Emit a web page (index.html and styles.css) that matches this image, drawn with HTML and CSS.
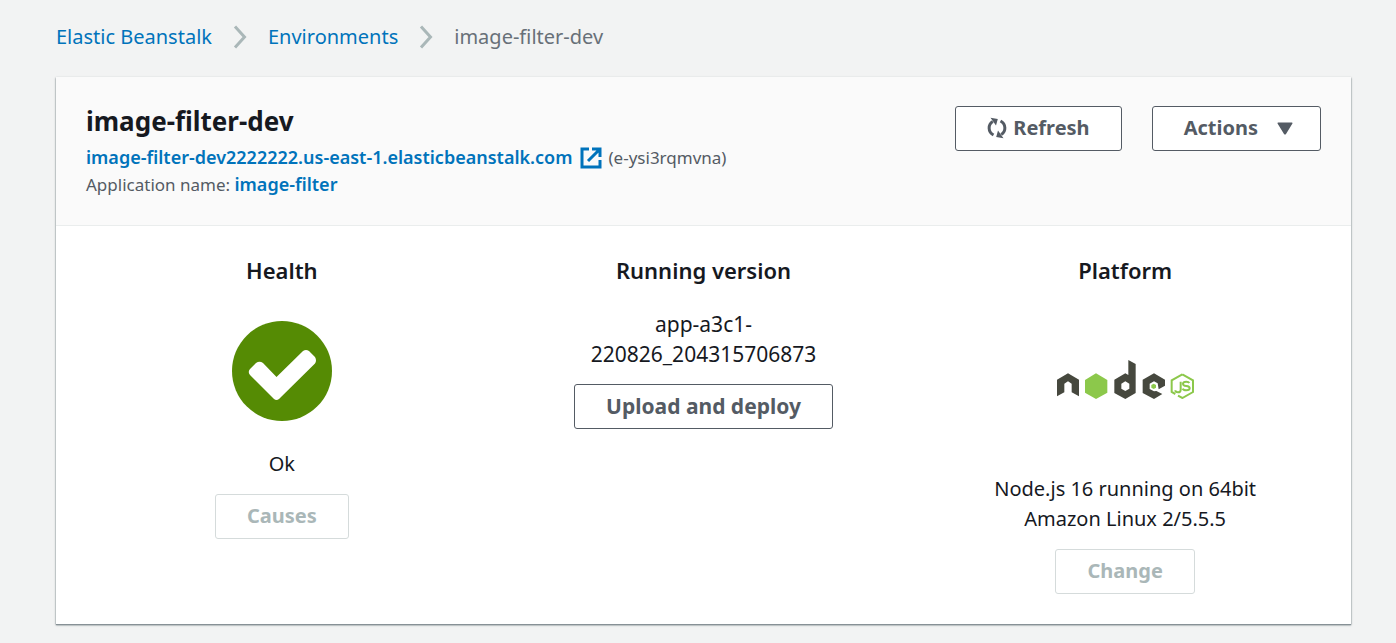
FILE: index.html
```html
<!DOCTYPE html>
<html lang="en">
<head>
<meta charset="utf-8">
<meta name="viewport" content="width=device-width, initial-scale=1">
<title>image-filter-dev</title>
<link rel="stylesheet" href="styles.css">
</head>
<body>
<nav class="breadcrumbs" aria-label="Breadcrumb">
  <a href="#">Elastic Beanstalk</a>
  <svg class="chevron" viewBox="0 0 14 24" aria-hidden="true"><path d="M2 1.500 11.500 12 2 22.500"/></svg>
  <a href="#">Environments</a>
  <svg class="chevron" viewBox="0 0 14 24" aria-hidden="true"><path d="M2 1.500 11.500 12 2 22.500"/></svg>
  <span>image-filter-dev</span>
</nav>
<main class="card">
  <header class="card-header">
    <div class="summary">
      <h1>image-filter-dev</h1>
      <p class="url-line">
        <a href="#">image-filter-dev2222222.us-east-1.elasticbeanstalk.com</a>
        <svg class="external" viewBox="0 0 22 22" aria-hidden="true"><path d="M9 2H2v18h18v-7M12 2h8v8M19.500 2.500 8 14"/></svg>
        <span>(e-ysi3rqmvna)</span>
      </p>
      <p>Application name: <a href="#">image-filter</a></p>
    </div>
    <div class="actions">
      <button class="button" type="button">
        <svg class="refresh" viewBox="0 0 20 22" aria-hidden="true">
          <path class="arc" d="M6.500 18C.8 15 .8 7.500 5.800 4.500M13.500 4C19.200 7 19.200 14.500 14.200 17.500"/>
          <path class="head" d="M3.500.8 10.800 2 9 8.500ZM16.500 21.200 9.200 20 11 13.500Z"/>
        </svg>Refresh
      </button>
      <button class="button" type="button">Actions
        <svg class="caret" viewBox="0 0 16 13" aria-hidden="true"><path d="M1 .5h14q1 .3.300 1.300L9 12q-1 1-2 0L.7 1.800Q0 .8 1 .5Z"/></svg>
      </button>
    </div>
  </header>
  <div class="columns">
    <section class="column">
      <h2>Health</h2>
      <svg class="status" viewBox="0 0 100 100" role="img" aria-label="Ok">
        <circle cx="50" cy="50" r="50"/>
        <path d="M18 48 24 42Q27.500 39.500 31 42L44.500 56 71 30Q74 28 77 30L83 36Q85 39.500 83 42.500L47 78Q44.500 80 42 78L18 54Q15.500 51 18 48Z"/>
      </svg>
      <p>Ok</p>
      <button class="button" type="button" disabled>Causes</button>
    </section>
    <section class="column version">
      <h2>Running version</h2>
      <p>app-a3c1-<br>220826_204315706873</p>
      <button class="button" type="button">Upload and deploy</button>
    </section>
    <section class="column">
      <h2>Platform</h2>
      <svg class="platform" viewBox="36 30 411 117" role="img" aria-label="Node.js">
        <g class="dark">
          <path d="M36 89 69 70 102 89V139L80 127V101L69 94 58 101V127L36 139Z"/>
          <path fill-rule="evenodd" d="M250 30 272 42V129L241 147 208 129V89L241 70 250 75ZM241 94 229 101V116L241 123 253 116V101Z"/>
          <path d="M327 70 360 89V107L341 118 338 100 327 94 314 101V117L327 124 334 123 352 132 327 147 293 129V89Z"/>
        </g>
        <path class="leaf" d="M153 70 187 90V128L153 147 120 128V90Z"/>
        <path class="leaf" d="M326 101 333 105V113L326 117 319 113V105Z"/>
        <path class="hex" d="M412 73 444 91V126L412 144 399 137M391 132 380 126V91L412 73"/>
        <path class="mark" d="M407 95V119Q407 127 399 127 391 127 391 121M433 99Q431 95 424 95 414 95 414 101 414 107 424 108 434 109 434 115 434 121 424 121 415 121 413 116"/>
      </svg>
      <p>Node.js 16 running on 64bit<br>Amazon Linux 2/5.5.5</p>
      <button class="button" type="button" disabled>Change</button>
    </section>
  </div>
</main>
</body>
</html>
```
FILE: styles.css
```css
* { box-sizing: border-box; }
body {
  margin: 0;
  padding: 22px 45px 18px 56px;
  background: #f2f3f3;
  color: #16191f;
  font: 20px/30px "Noto Sans", "Open Sans", sans-serif;
}
h1, h2, p { margin: 0; }
a { color: #0073bb; text-decoration: none; }
a:hover { text-decoration: underline; }
svg { flex: none; }

.breadcrumbs { display: flex; align-items: center; gap: 21px; color: #687078; }
.chevron { width: 14px; height: 24px; }
.chevron path { fill: none; stroke: #aab7b8; stroke-width: 3; }

.card {
  margin-top: 25px;
  background: #fff;
  box-shadow: 0 1px 1px #879196, 0 1px 2px rgba(0, 28, 36, .5);
}
.card-header {
  display: flex;
  justify-content: space-between;
  align-items: flex-start;
  padding: 29px 30px 27px;
  background: #fafafa;
  border-bottom: 1px solid #eaeded;
}
.summary { color: #545b64; font-size: 17px; line-height: 27px; }
.summary h1 { margin-bottom: 8px; color: #16191f; font-size: 26px; line-height: 30px; font-weight: 700; }
.summary a { font-size: 18px; font-weight: 600; }
.url-line { display: flex; align-items: center; gap: 7px; }
.external { width: 22px; height: 22px; }
.external path { fill: none; stroke: #0073bb; stroke-width: 3; }

.actions { display: flex; gap: 30px; }
.button {
  display: inline-flex;
  align-items: center;
  height: 45px;
  padding: 0 31px 1px;
  border: 1px solid #545b64;
  border-radius: 3px;
  background: #fff;
  color: #545b64;
  font: inherit;
  font-weight: 700;
}
.button:disabled { border-color: #d5dbdb; color: #aab7b8; }
.refresh { width: 20px; height: 22px; margin-right: 6px; }
.refresh .arc { fill: none; stroke: #545b64; stroke-width: 3; }
.refresh .head { fill: #545b64; }
.caret { width: 16px; height: 13px; margin: 0 -4px 0 19px; fill: #545b64; }

.columns { display: grid; grid-template-columns: repeat(3, 1fr); gap: 30px; padding: 29px 30px 30px; }
.column { display: flex; flex-direction: column; align-items: center; text-align: center; }
.column h2 { margin-bottom: 24px; font-size: 22px; line-height: 30px; font-weight: 600; }
.column p { margin-bottom: 15px; }
.version { font-size: 21px; }
.status { width: 100px; height: 100px; margin: 12px 0 28px; }
.status circle { fill: #558b04; }
.status path { fill: #fff; }
.platform { width: 137px; height: 39px; margin: 51px 0 75px; }
.platform .dark { fill: #46483e; }
.platform .leaf { fill: #8cc84b; }
.platform .hex { fill: none; stroke: #8cc84b; stroke-width: 6; }
.platform .mark { fill: none; stroke: #8cc84b; stroke-width: 6; }
```
